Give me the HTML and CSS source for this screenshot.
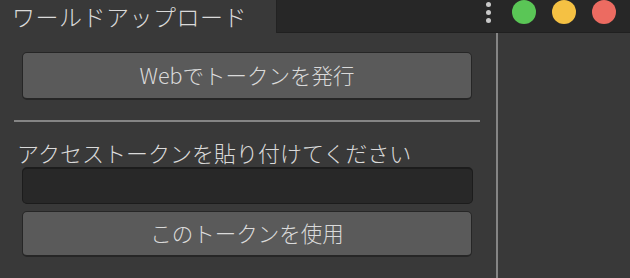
FILE: index.html
```html
<!DOCTYPE html>
<html lang="ja">
<head>
<meta charset="utf-8">
<link rel="stylesheet" href="styles.css">
</head>
<body>
<div class="window">
  <div class="tabbar">
    <div class="tab">ワールドアップロード</div>
    <div class="tabfill">
      <div class="menu"><span></span><span></span><span></span></div>
      <div class="lights">
        <span class="light green"></span>
        <span class="light yellow"></span>
        <span class="light red"></span>
      </div>
    </div>
  </div>
  <div class="panel">
    <div class="left">
      <div class="btn first">Webでトークンを発行</div>
      <div class="sep"></div>
      <div class="label">アクセストークンを貼り付けてください</div>
      <div class="input"></div>
      <div class="btn second">このトークンを使用</div>
    </div>
    <div class="divider"></div>
    <div class="right"></div>
  </div>
</div>
</body>
</html>
```

FILE: styles.css
```css
html, body {
  margin: 0;
  padding: 0;
  background: #393939;
}
body {
  font-family: "Noto Sans CJK JP", "Noto Sans", sans-serif;
  font-weight: 300;
  color: #dadada;
  width: 630px;
  height: 278px;
  overflow: hidden;
}
.window {
  display: flex;
  flex-direction: column;
  height: 278px;
}
.tabbar {
  display: flex;
  height: 33px;
}
.tab {
  width: 277px;
  height: 33px;
  background: #393939;
  border-right: 1px solid #222222;
  font-size: 23px;
  line-height: 33px;
  padding-left: 12px;
  box-sizing: border-box;
  letter-spacing: 0.5px;
  white-space: nowrap;
}
.tabfill {
  flex: 1;
  background: #272727;
  border-bottom: 1px solid #202020;
  display: flex;
  justify-content: flex-end;
  align-items: flex-start;
  padding-right: 14px;
}
.menu {
  display: flex;
  flex-direction: column;
  gap: 3px;
  margin-top: 2px;
  margin-right: 21px;
}
.menu span {
  width: 5px;
  height: 5px;
  border-radius: 50%;
  background: #c9c9c9;
}
.lights {
  display: flex;
  gap: 16px;
}
.light {
  width: 24px;
  height: 24px;
  border-radius: 50%;
}
.green { background: #5ac656; }
.yellow { background: #f5c143; }
.red { background: #ec6b61; }
.panel {
  flex: 1;
  display: flex;
}
.left {
  width: 496px;
  display: flex;
  flex-direction: column;
  padding-top: 19px;
}
.divider {
  width: 2px;
  background: #858585;
}
.right {
  flex: 1;
}
.btn {
  margin-left: 22px;
  width: 450px;
  box-sizing: border-box;
  background: #5a5a5a;
  border: 1px solid #262626;
  border-bottom-width: 2px;
  border-radius: 5px;
  font-size: 21.5px;
  display: flex;
  align-items: center;
  justify-content: center;
  padding-bottom: 3px;
  white-space: nowrap;
}
.first {
  height: 48px;
}
.sep {
  margin: 20px 0 0 14px;
  width: 466px;
  height: 2px;
  background: #858585;
}
.label {
  margin: 17px 0 0 17px;
  font-size: 22px;
  line-height: 27px;
  white-space: nowrap;
}
.input {
  margin: 1px 0 0 22px;
  width: 451px;
  height: 37px;
  box-sizing: border-box;
  background: #282828;
  border: 1px solid #1c1c1c;
  border-top-width: 2px;
  border-radius: 5px;
}
.second {
  margin-top: 7px;
  height: 46px;
}
```
